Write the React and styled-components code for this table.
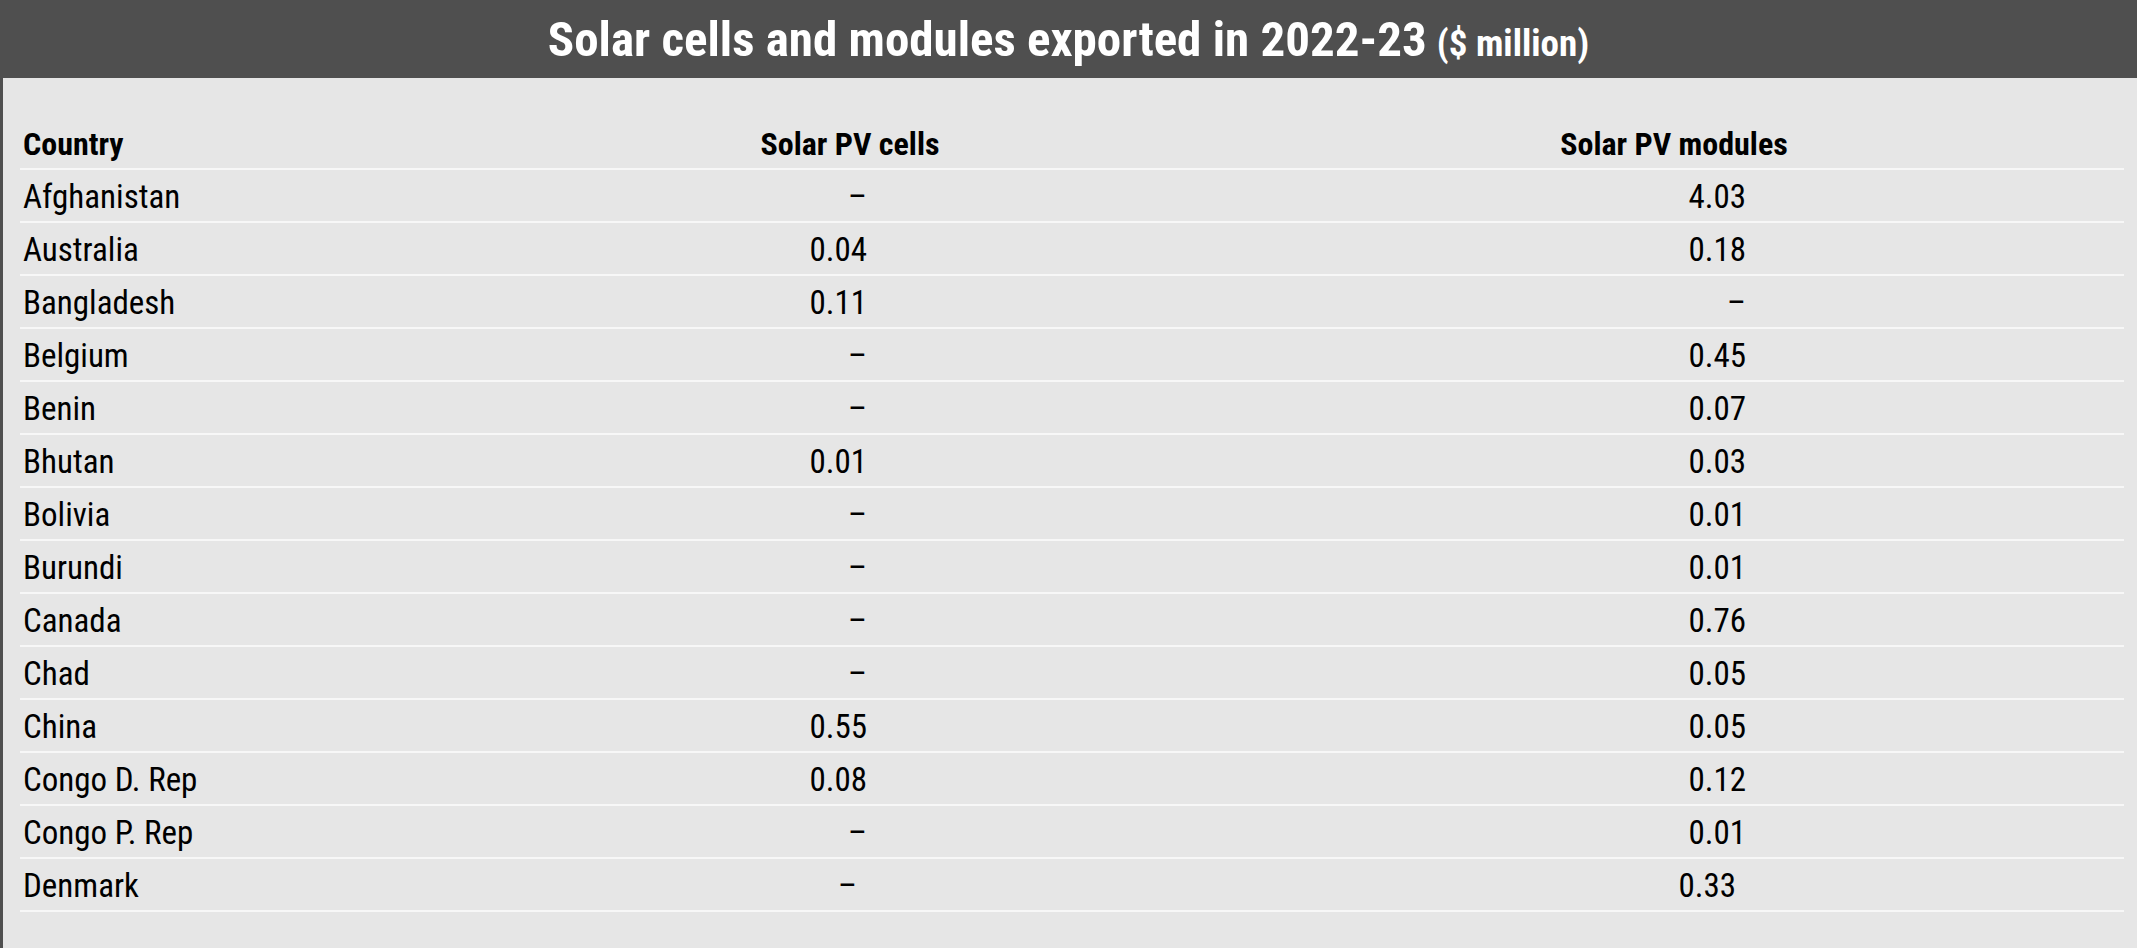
import React from "react";
import styled, { createGlobalStyle } from "styled-components";

const Global = createGlobalStyle`
  html, body { margin: 0; padding: 0; background: #e6e6e6; }
  body { font-family: "Roboto Condensed", "Liberation Sans Narrow", sans-serif; color: #000; }
`;

const Page = styled.div`
  width: 2137px;
  min-height: 948px;
  box-sizing: border-box;
  border-left: 3px solid #4f4f4f;
  background: #e6e6e6;
`;

const TitleBar = styled.header`
  height: 78px;
  background: #4f4f4f;
  margin-left: -3px;
  display: flex;
  align-items: center;
  justify-content: center;
  color: #fff;
  font-weight: 700;
`;

const TitleMain = styled.span`
  font-size: 49px;
`;

const TitleUnit = styled.span`
  font-size: 37px;
  margin-left: 10px;
  position: relative;
  top: 4px;
`;

const Table = styled.div`
  margin: 39px 0 0 17px;
  width: 2104px;
  display: grid;
  grid-template-columns: 456px 748px 900px;
`;

const Cell = styled.div`
  height: 49px;
  padding-top: 2px;
  border-bottom: 2px solid #f7f7f7;
  display: flex;
  align-items: center;
  box-sizing: content-box;
  font-size: ${(p) => (p.$head ? 32 : 33)}px;
  font-weight: ${(p) => (p.$head ? 700 : 400)};
  justify-content: ${(p) => (p.$align === "center" ? "center" : p.$align === "right" ? "flex-end" : "flex-start")};
  padding-left: ${(p) => (p.$align === "left" ? "3px" : "0")};
  padding-right: ${(p) => (p.$pr ? p.$pr : 0)}px;
  white-space: nowrap;
`;

const rows = [
  ["Afghanistan", "–", "4.03"],
  ["Australia", "0.04", "0.18"],
  ["Bangladesh", "0.11", "–"],
  ["Belgium", "–", "0.45"],
  ["Benin", "–", "0.07"],
  ["Bhutan", "0.01", "0.03"],
  ["Bolivia", "–", "0.01"],
  ["Burundi", "–", "0.01"],
  ["Canada", "–", "0.76"],
  ["Chad", "–", "0.05"],
  ["China", "0.55", "0.05"],
  ["Congo D. Rep", "0.08", "0.12"],
  ["Congo P. Rep", "–", "0.01"],
  ["Denmark", "–", "0.33", 10],
];

export default function App() {
  return (
    <>
      <Global />
      <Page>
        <TitleBar>
          <TitleMain>Solar cells and modules exported in 2022-23</TitleMain>
          <TitleUnit>($ million)</TitleUnit>
        </TitleBar>
        <Table>
          <Cell $head $align="left">Country</Cell>
          <Cell $head $align="center">Solar PV cells</Cell>
          <Cell $head $align="center">Solar PV modules</Cell>
          {rows.map(([c, a, b, shift = 0]) => (
            <React.Fragment key={c}>
              <Cell $align="left">{c}</Cell>
              <Cell $align="right" $pr={357 + shift}>{a}</Cell>
              <Cell $align="right" $pr={378 + shift}>{b}</Cell>
            </React.Fragment>
          ))}
        </Table>
      </Page>
    </>
  );
}
